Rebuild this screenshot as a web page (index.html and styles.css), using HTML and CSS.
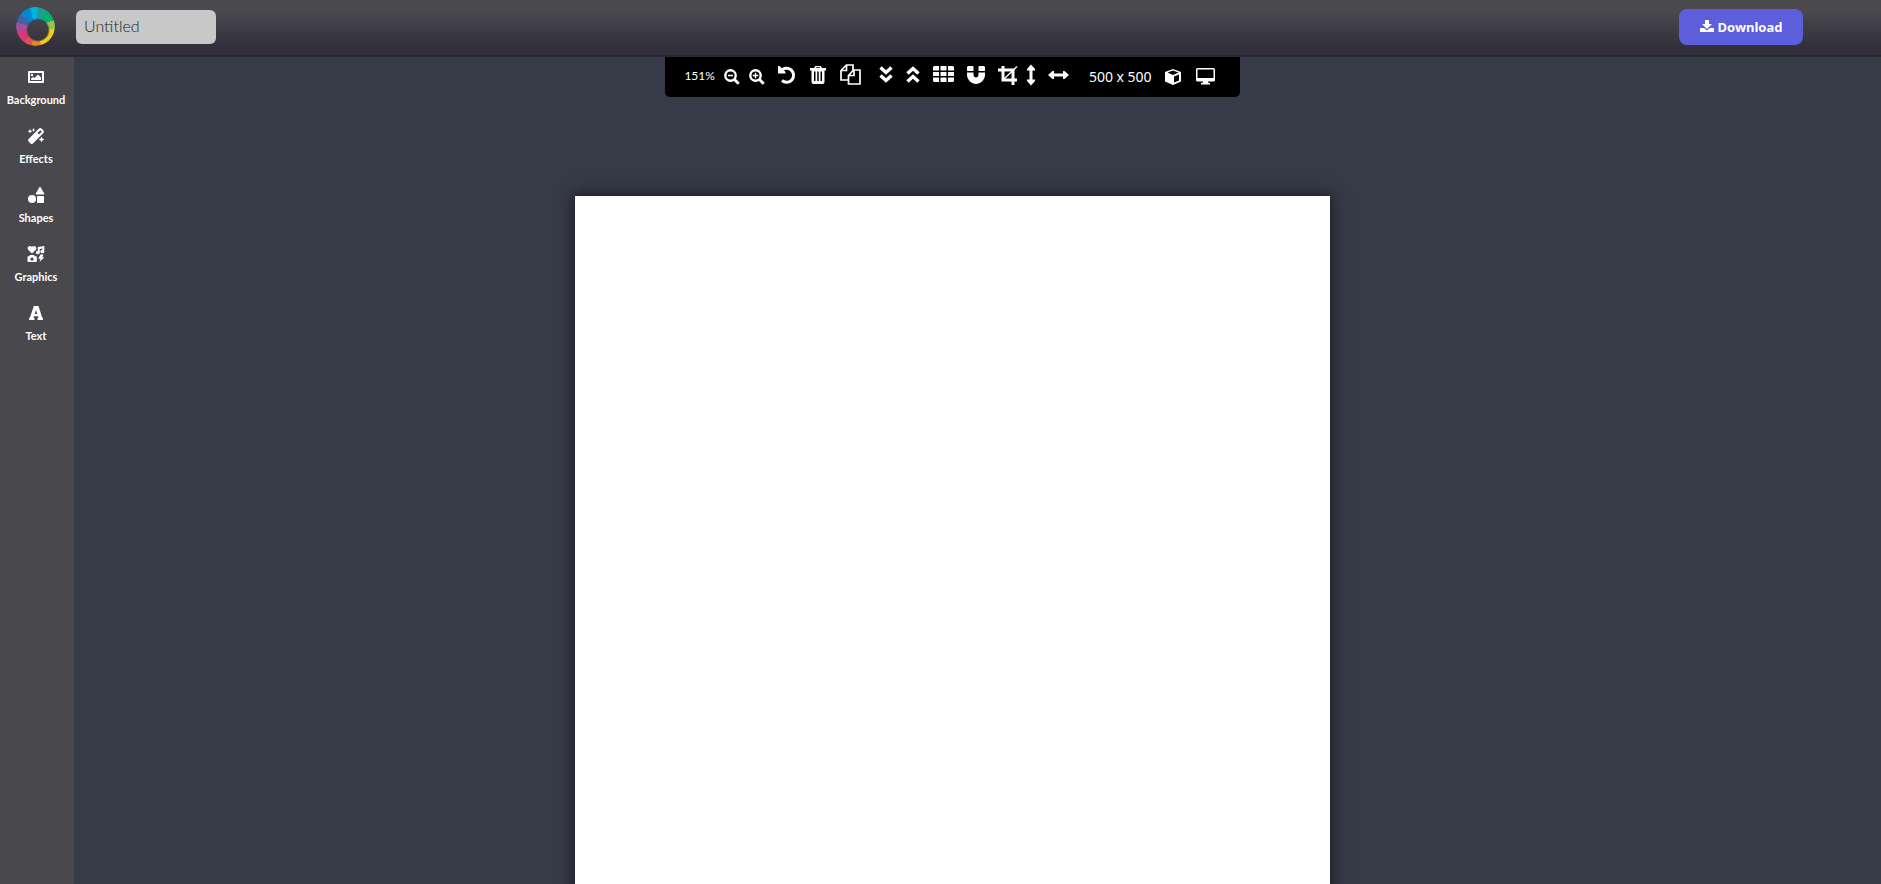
FILE: index.html
```html
<!DOCTYPE html>
<html lang="en">
<head>
<meta charset="utf-8">
<title>Untitled - Design editor</title>
<link rel="stylesheet" href="styles.css">
</head>
<body>
<header class="topbar">
  <a class="logo" href="#" aria-label="Home"></a>
  <input class="title-input" type="text" value="Untitled" aria-label="Design title">
  <button class="download" type="button">
    <svg width="14" height="14" viewBox="0 0 14 14" aria-hidden="true"><path d="M5 0h4v4h3L7 9 2 4h3zM0 8h4l3 2.600L10 8h4v4H0z"/></svg>
    Download
  </button>
</header>
<div class="workspace">
  <nav class="sidebar" aria-label="Tools">
    <button class="tool" type="button">
      <svg width="18" height="16" viewBox="0 0 18 16" aria-hidden="true"><path fill-rule="evenodd" d="M2 2h14q1 0 1 1v10q0 1-1 1H2q-1 0-1-1V3q0-1 1-1zm1 2v8h12V4z"/><circle cx="5" cy="6" r="1.200"/><path d="M4 11V9.500L6 8l1.500 1L11 5.500l3 3V11z"/></svg>
      <span>Background</span>
    </button>
    <button class="tool" type="button">
      <svg width="18" height="16" viewBox="0 0 18 16" aria-hidden="true"><path fill-rule="evenodd" d="M12 .6Q13.300-.4 14.500.6L16.400 2.500Q17.400 3.700 16.400 4.900L5.900 15.400Q4.700 16.400 3.500 15.400L1.600 13.500Q.6 12.300 1.600 11.100zM13.300 2.200 10.500 5l1.500 1.500 2.800-2.800z"/><path d="M6.500 0l.6 1.400L8.500 2l-1.400.6L6.500 4l-.6-1.400L4.500 2l1.400-.6zM3 .8l.7 1.700 1.700.7-1.700.7L3 5.600l-.7-1.700L.6 3.200l1.700-.7zM14.500 8.700l.9 1.900 1.900.9-1.900.9-.9 1.900-.9-1.900-1.900-.9 1.900-.9z"/></svg>
      <span>Effects</span>
    </button>
    <button class="tool" type="button">
      <svg width="18" height="16" viewBox="0 0 18 16" aria-hidden="true"><path d="M12.300.5q.7-1 1.400 0l3.500 6q.3 1-.7 1h-7q-1 0-.7-1z"/><circle cx="5" cy="12" r="4"/><rect x="10" y="9" width="7" height="7" rx=".8"/></svg>
      <span>Shapes</span>
    </button>
    <button class="tool" type="button">
      <svg width="18" height="16" viewBox="0 0 18 16" aria-hidden="true"><path d="M5 7.500 1.300 4C-.1 2 1 0 3 0Q4.200 0 5 1 5.800 0 7 0c2 0 3.100 2 1.700 4zM10.800 1 17.300 0v5.300a2 1.700 0 1 1-2-1.500V2.600l-2.500.5v3.200a2 1.700 0 1 1-2-1.500zM13.500 8.500h3l-1.200 2.700h2L12.500 16l1-3.300h-2.300z"/><path fill-rule="evenodd" d="M3 9h4l.8 1.300H9q.8 0 .8.800v4.100q0 .8-.8.800H1.300q-.8 0-.8-.8v-4.100q0-.8.8-.8h.9zM5 11.500a1.600 1.600 0 1 0 .01 0z"/></svg>
      <span>Graphics</span>
    </button>
    <button class="tool" type="button">
      <svg width="18" height="16" viewBox="0 0 18 16" aria-hidden="true"><path fill-rule="evenodd" d="M6.500 1h5l3.700 11.800H16V15h-5.500v-2.200h1L11.100 11.300H6.900l-.4 1.500h1V15H2v-2.200h.8L6.200 3h.3zm2.500 4L7.700 9h2.600z"/></svg>
      <span>Text</span>
    </button>
  </nav>
  <main class="stage">
    <div class="toolbar" role="toolbar" aria-label="Canvas tools">
      <div class="zoom">
        <span class="zoom-level">151%</span>
        <button class="action" type="button" aria-label="Zoom out"><svg width="16" height="26" viewBox="0 0 16 26"><g class="line"><circle cx="6.500" cy="13.500" r="5.200" stroke-width="2.400"/><path d="M4 13.500h5" stroke-width="1.500"/><path d="M10.200 17.200l4.500 4.500" stroke-width="3"/></g></svg></button>
        <button class="action" type="button" aria-label="Zoom in"><svg width="16" height="26" viewBox="0 0 16 26"><g class="line"><circle cx="6.500" cy="13.500" r="5.200" stroke-width="2.400"/><path d="M3.700 13.500h5.600M6.500 10.700v5.600" stroke-width="1.500"/><path d="M10.200 17.200l4.500 4.500" stroke-width="3"/></g></svg></button>
      </div>
      <button class="action" type="button" aria-label="Undo"><svg width="18" height="26" viewBox="0 0 18 26"><path d="M0 4h1.500l6 6v1.500H0z"/><path class="line" d="M3 9A7 7 0 1 1 4 18.500" stroke-width="3"/></svg></button>
      <button class="action" type="button" aria-label="Delete"><svg width="18" height="26" viewBox="0 0 18 26"><path fill-rule="evenodd" d="M5 6l1.300-2h5.400L13 6h4v2.500h-1.500V20q0 2-2 2h-9q-2 0-2-2V8.500H1V6zm1.700 0h4.600l-.6-.8H7.300zM5 9.500V19h1.500V9.500zm3.250 0V19h1.500V9.500zm3.250 0V19H13V9.500z"/></svg></button>
      <button class="action" type="button" aria-label="Duplicate"><svg width="21" height="26" viewBox="0 0 21 26"><g class="line" stroke-width="1.700"><path d="M8 18H1V8.500L6.500 3H13v5M6.500 3v5.500H1"/><path d="M8.500 13.500l5-5.500H20v14H8.500zM14 8v5.500H8.500"/></g></svg></button>
      <button class="action action-spaced" type="button" aria-label="Send backward"><svg width="14" height="26" viewBox="0 0 14 26"><path class="line" d="M1.500 5.500 7 10.500l5.500-5M1.500 13.500 7 18.500l5.500-5" stroke-width="3.400"/></svg></button>
      <button class="action" type="button" aria-label="Bring forward"><svg width="14" height="26" viewBox="0 0 14 26"><path class="line" d="M1.500 11.500 7 6.500l5.500 5M1.500 19.500 7 14.500l5.500 5" stroke-width="3.400"/></svg></button>
      <button class="action" type="button" aria-label="Toggle grid"><svg width="21" height="26" viewBox="0 0 21 26"><path d="M1 4h5v4.500H0V5zM7.500 4h6v4.500h-6zM15 4h5l1 1v3.500h-6zM0 10h6v4H0zM7.500 10h6v4h-6zM15 10h6v4h-6zM0 15.500h6V20H1l-1-1zM7.500 15.500h6V20h-6zM15 15.500h6V19l-1 1h-5z"/></svg></button>
      <button class="action" type="button" aria-label="Snap"><svg width="18" height="26" viewBox="0 0 18 26"><path d="M1 4h5l.5 1v4H0V5zM12 4h5l1 1v4h-6.500V5zM0 10.500h6.500V13a2.500 2.500 0 0 0 5 0v-2.500H18V13A9 9 0 0 1 0 13z"/></svg></button>
      <div class="pair">
        <button class="action" type="button" aria-label="Crop"><svg width="20" height="26" viewBox="0 0 20 26"><g class="line"><path d="M5 4v14h9" stroke-width="3"/><path d="M0 8h15v15" stroke-width="3"/><path d="M15 18h4" stroke-width="3"/><path d="M6 17 19 4.500" stroke-width="1.400"/></g></svg></button>
        <button class="action" type="button" aria-label="Centre vertically"><svg width="8" height="26" viewBox="0 0 8 26"><path d="M4 2.500 8 7v1.500H5.500v9H8V19l-4 4.500L0 19v-1.500h2.500v-9H0V7z"/></svg></button>
      </div>
      <button class="action" type="button" aria-label="Centre horizontally"><svg width="21" height="26" viewBox="0 0 21 26"><path d="M0 13l4.500-4H6v2.500h9V9h1.500l4.500 4-4.500 4H15v-2.500H6V17H4.500z"/></svg></button>
      <button class="action size" type="button">500 x 500</button>
      <div class="views">
        <button class="action" type="button" aria-label="3D view"><svg width="16" height="26" viewBox="0 0 16 26"><path fill-rule="evenodd" d="M8 7l8 3v9.500L8 23l-8-3.500V10zm0 1.500L2.500 10.600 8 12.900l5.500-2.300zM9 14.600v6l5-2.200v-6z"/></svg></button>
        <button class="action" type="button" aria-label="Preview"><svg width="20" height="26" viewBox="0 0 20 26"><path fill-rule="evenodd" d="M1.500 6h16Q19 6 19 7.500V18q0 1.500-1.500 1.500H12l.5 1.500H14v1.500H5V21h1.500l.5-1.500H1.500Q0 19.500 0 18V7.500Q0 6 1.500 6zm0 1.500V16h16V7.500z"/></svg></button>
      </div>
    </div>
    <div class="canvas"></div>
  </main>
</div>
</body>
</html>
```
FILE: styles.css
```css
* {
  box-sizing: border-box;
}

body {
  display: flex;
  flex-direction: column;
  height: 100vh;
  margin: 0;
  overflow: hidden;
  background: #373b47;
  color: #fff;
  font-family: Lato, sans-serif;
}

button {
  border: 0;
  padding: 0;
  background: none;
  color: inherit;
  font: inherit;
  cursor: pointer;
}

svg {
  display: block;
  fill: currentColor;
}

.topbar {
  display: flex;
  flex: none;
  align-items: center;
  height: 57px;
  padding: 0 78px 2px 16px;
  border-bottom: 2px solid #2a2933;
  background: linear-gradient(#4a494d 20%, #32313b 85%);
}

.logo {
  width: 39px;
  height: 39px;
  margin-right: 21px;
  border-radius: 50%;
  background: conic-gradient(from -17deg, #00b3e3 25deg, #1b9f92 0 55deg, #00b16b 0 88deg, #9cc14b 0 116deg, #edd017 0 180deg, #e0862d 0 208deg, #df5357 0 233deg, #d73778 0 271deg, #a6509a 0 298deg, #4360a9 0 326deg, #008bd0 0);
  mask: radial-gradient(circle at 22px 23px, transparent 10px, #000 12px);
}

.title-input {
  width: 140px;
  height: 34px;
  padding: 0 8px 2px;
  border: 0;
  border-radius: 6px;
  background: #c8c8c8;
  color: #222;
  font: 300 16px Lato, sans-serif;
}

.download {
  display: flex;
  align-items: center;
  justify-content: center;
  gap: 4px;
  width: 124px;
  height: 36px;
  margin-left: auto;
  border-radius: 8px;
  background: #5c5edc;
  font: bold 13px "Noto Sans", sans-serif;
}

.workspace {
  display: flex;
  flex: 1;
  min-height: 0;
}

.sidebar {
  flex: none;
  width: 74px;
  padding-top: 3px;
  background: #49484c;
}

.tool {
  display: flex;
  flex-direction: column;
  align-items: center;
  gap: 8px;
  width: 100%;
  height: 59px;
  padding: 9px 2px 0 0;
  font-size: 11px;
  font-weight: bold;
  line-height: 14px;
}

.stage {
  display: flex;
  flex: 1;
  flex-direction: column;
  align-items: center;
  min-width: 0;
  padding-right: 50px;
  overflow: hidden;
}

.toolbar {
  display: flex;
  flex: none;
  align-items: center;
  gap: 13px;
  height: 40px;
  padding: 0 24px 4px 19px;
  border-radius: 0 0 5px 5px;
  background: #000;
  font-size: 14px;
  line-height: 20px;
}

.zoom {
  display: flex;
  align-items: center;
  gap: 9px;
}

.zoom-level {
  padding-top: 2px;
  font-size: 12px;
}

.pair {
  display: flex;
  gap: 9px;
}

.views {
  display: flex;
  gap: 15px;
}

.action-spaced {
  margin-left: 5px;
}

.size {
  margin-left: 7px;
  padding-top: 3px;
  font-family: "Noto Sans", sans-serif;
}

.line {
  fill: none;
  stroke: currentColor;
}

.canvas {
  flex: none;
  width: 755px;
  max-width: 100%;
  aspect-ratio: 1;
  margin-top: 99px;
  background: #fff;
  box-shadow: 0 0 14px 2px #1c1b24;
}
```
